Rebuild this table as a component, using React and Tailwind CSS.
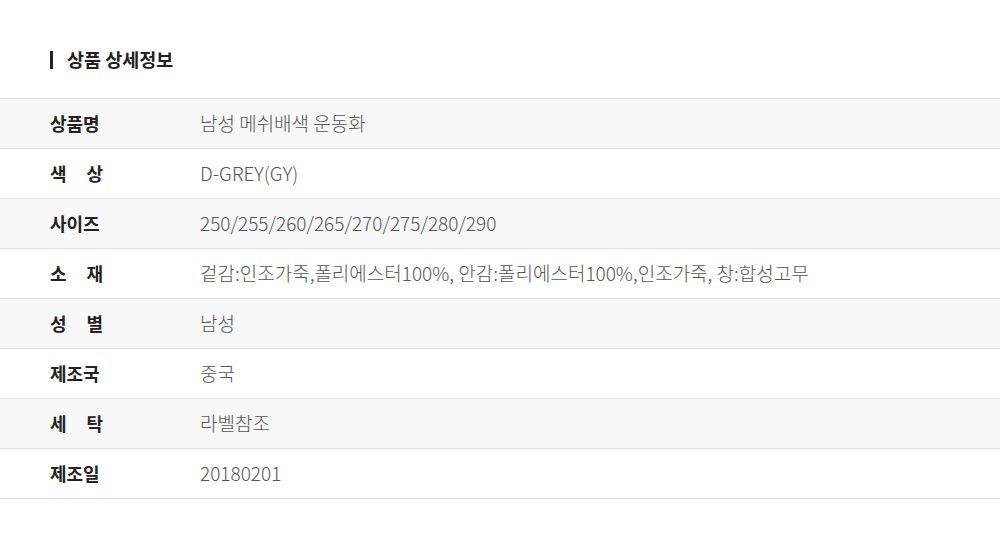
const rows = [
  { label: ["상품명"], value: "남성 메쉬배색 운동화" },
  { label: ["색", "상"], value: "D-GREY(GY)" },
  { label: ["사이즈"], value: "250/255/260/265/270/275/280/290" },
  { label: ["소", "재"], value: "겉감:인조가죽,폴리에스터100%, 안감:폴리에스터100%,인조가죽, 창:합성고무" },
  { label: ["성", "별"], value: "남성" },
  { label: ["제조국"], value: "중국" },
  { label: ["세", "탁"], value: "라벨참조" },
  { label: ["제조일"], value: "20180201" },
]

export default function App() {
  return (
    <div className="h-[548px] w-[1000px] bg-white font-['Noto_Sans_CJK_KR','Noto_Sans',sans-serif]">
      <div className="flex h-[98px] items-start pt-[46px] pl-[50px]">
        <span className="mt-[5px] h-[18px] w-[3px] bg-[#222]" />
        <h2 className="ml-[14px] text-[18.5px] leading-[26px] font-bold text-[#222]">상품 상세정보</h2>
      </div>
      <div className="border-t border-[#e0e0e0]">
        {rows.map((row, i) => (
          <div
            key={i}
            className={
              "flex h-[50px] items-center border-b border-[#e0e0e0] " +
              (i % 2 === 0 ? "bg-[#f8f8f8]" : "bg-white")
            }
          >
            <div className="w-[200px] shrink-0 pl-[50px]">
              <div className="flex w-[53px] justify-between text-[18px] font-bold text-[#222]">
                {row.label.map((ch) => (
                  <span key={ch}>{ch}</span>
                ))}
              </div>
            </div>
            <div className="text-[19px] font-light text-[#555]">{row.value}</div>
          </div>
        ))}
      </div>
    </div>
  )
}
